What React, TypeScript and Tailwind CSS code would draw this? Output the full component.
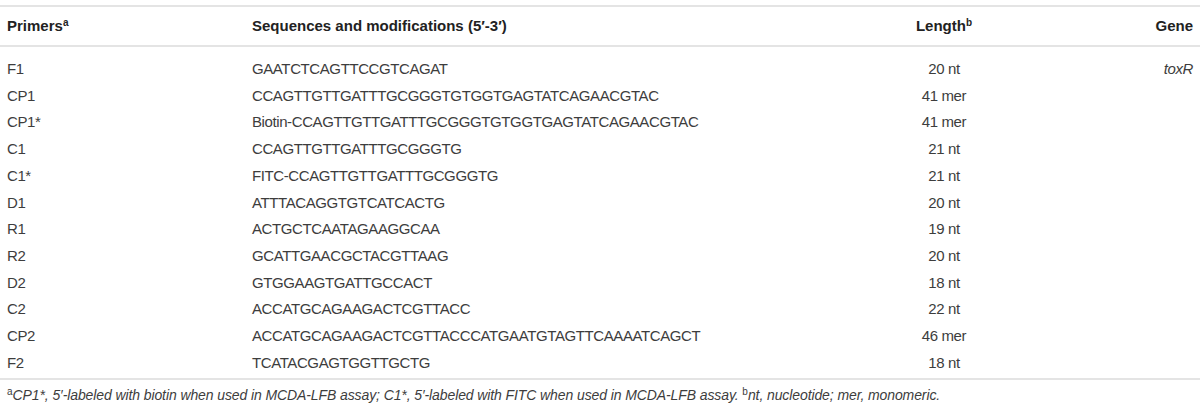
const rows = [
  { p: "F1", s: "GAATCTCAGTTCCGTCAGAT", l: "20 nt", g: "toxR" },
  { p: "CP1", s: "CCAGTTGTTGATTTGCGGGTGTGGTGAGTATCAGAACGTAC", l: "41 mer" },
  { p: "CP1*", s: "Biotin-CCAGTTGTTGATTTGCGGGTGTGGTGAGTATCAGAACGTAC", l: "41 mer" },
  { p: "C1", s: "CCAGTTGTTGATTTGCGGGTG", l: "21 nt" },
  { p: "C1*", s: "FITC-CCAGTTGTTGATTTGCGGGTG", l: "21 nt" },
  { p: "D1", s: "ATTTACAGGTGTCATCACTG", l: "20 nt" },
  { p: "R1", s: "ACTGCTCAATAGAAGGCAA", l: "19 nt" },
  { p: "R2", s: "GCATTGAACGCTACGTTAAG", l: "20 nt" },
  { p: "D2", s: "GTGGAAGTGATTGCCACT", l: "18 nt" },
  { p: "C2", s: "ACCATGCAGAAGACTCGTTACC", l: "22 nt" },
  { p: "CP2", s: "ACCATGCAGAAGACTCGTTACCCATGAATGTAGTTCAAAATCAGCT", l: "46 mer" },
  { p: "F2", s: "TCATACGAGTGGTTGCTG", l: "18 nt" },
];

function Sup({ children }: { children: string }) {
  return <span className="text-[10px] not-italic align-[5px] leading-none tracking-normal">{children}</span>;
}

export default function App() {
  return (
    <div className="w-[1200px] h-[414px] bg-white pt-[5px] text-[15px] font-['Liberation_Sans',Arial,sans-serif] text-[#3d3d3d]">
      <div className="h-[2px] bg-[#e4e4e4]" />
      <div className="flex items-center h-[38px] px-[7px] font-bold text-[#222]">
        <div className="w-[245px]">
          Primers<Sup>a</Sup>
        </div>
        <div className="flex-1">Sequences and modifications (5′-3′)</div>
        <div className="w-[120px] text-center">
          Length<Sup>b</Sup>
        </div>
        <div className="w-[189px] text-right">Gene</div>
      </div>
      <div className="h-[2px] bg-[#e4e4e4]" />
      <div className="pt-[9px] pb-[2px] tracking-[-0.4px]">
        {rows.map((r) => (
          <div key={r.p} className="flex items-center h-[26.7px] px-[7px]">
            <div className="w-[245px]">{r.p}</div>
            <div className="flex-1">{r.s}</div>
            <div className="w-[120px] text-center">{r.l}</div>
            <div className="w-[189px] text-right italic">{r.g ?? ""}</div>
          </div>
        ))}
      </div>
      <div className="h-[2px] bg-[#e4e4e4]" />
      <p className="px-[7px] pt-[4px] italic text-[14px] leading-[22px] tracking-[-0.1px]">
        <Sup>a</Sup>CP1*, 5′-labeled with biotin when used in MCDA-LFB assay; C1*, 5′-labeled with FITC when used in
        MCDA-LFB assay. <Sup>b</Sup>nt, nucleotide; mer, monomeric.
      </p>
    </div>
  );
}
